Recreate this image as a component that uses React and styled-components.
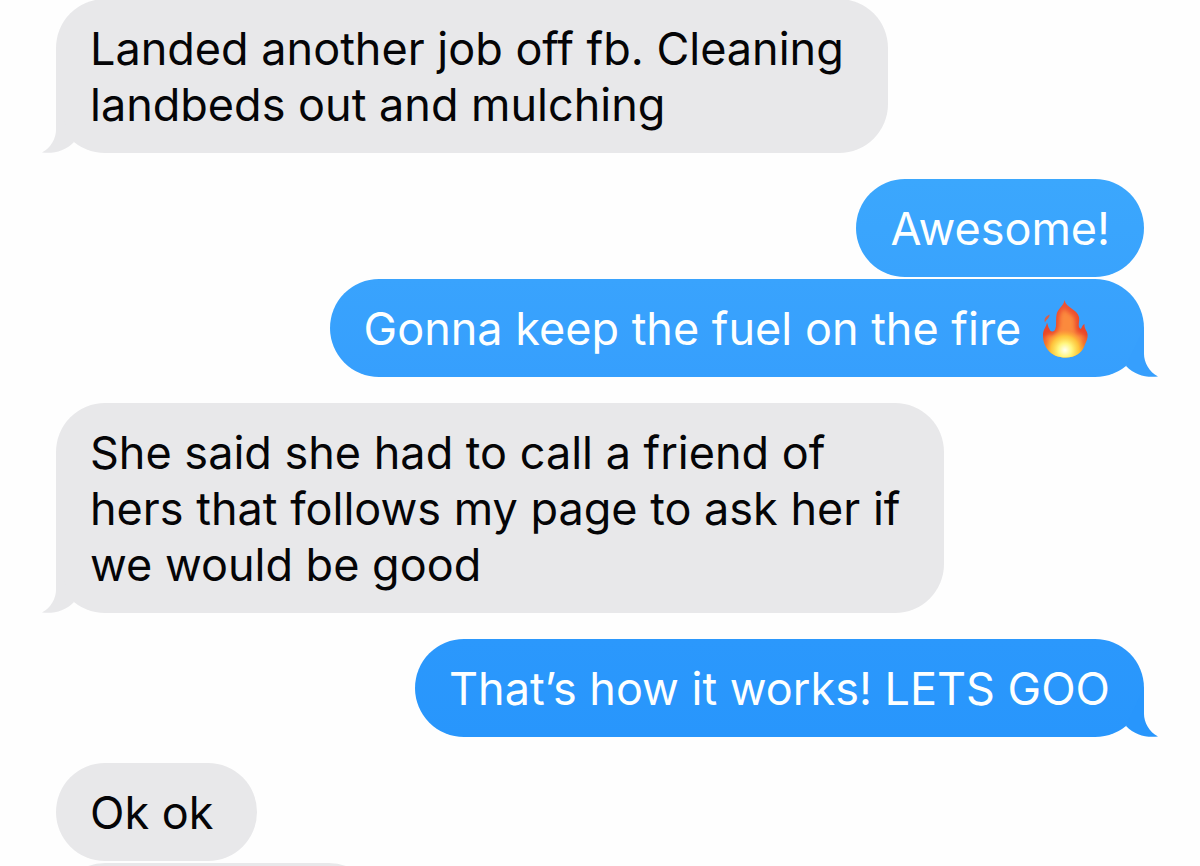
import React from "react";
import styled, { createGlobalStyle } from "styled-components";

const GlobalStyle = createGlobalStyle`
  * { box-sizing: border-box; }
  html, body { margin: 0; background: #fefefe; }
  body { font-family: Inter, "Liberation Sans", sans-serif; }
`;

const Viewport = styled.main`
  height: 100vh;
  overflow: hidden;
`;

const Thread = styled.ol`
  list-style: none;
  margin: -1px 0 0;
  padding: 0 56px;
  display: flex;
  flex-direction: column;
  gap: 26px;
`;

const Group = styled.li`
  display: flex;
  flex-direction: column;
  align-items: ${(p) => (p.$sent ? "flex-end" : "flex-start")};
  gap: 2px;
`;

const Bubble = styled.p`
  position: relative;
  margin: 0;
  padding: ${(p) => (p.$sent ? "22px 34px 20px" : "22px 44px 20px 34px")};
  min-height: 98px;
  border-radius: 49px;
  font-size: 45px;
  line-height: 56px;
  color: ${(p) => (p.$sent ? "#fdffff" : "#050507")};
  background: ${(p) => p.$fill || "#e8e8ea"};
`;

const EmptyBubble = styled(Bubble)`
  width: 322px;
`;

const TailShape = styled.svg`
  position: absolute;
  bottom: 0;
  width: 32px;
  height: 53px;
  ${(p) => (p.$sent ? "right: -14px; transform: scaleX(-1);" : "left: -14px;")}
  fill: ${(p) => p.$color};
`;

const FireIcon = styled.svg`
  display: inline-block;
  width: 52px;
  height: 60px;
  margin: -8px 20px -8px 4px;
  vertical-align: -6px;
`;

function Tail({ sent, color = "#e8e8ea" }) {
  return (
    <TailShape $sent={sent} $color={color} viewBox="0 0 32 53" aria-hidden="true">
      <path d="M14 4V30C14 38 9 48 0 52.5C12 54 23 51 32 42Z" />
    </TailShape>
  );
}

function Fire() {
  const flame =
    "M26.5 1C26 7 19 10 18.5 16C17.5 22 19 26 17 31C14 34 12 32 11.500 30C10 28 10 26 9 23.500C8.500 28 5 30 5 36C5 43 7 47 10 51C14 56 20 58.500 28 58.500C37 58.500 43 54 46 48C48 43 50 40 49.500 35C49 31 46 30 46.500 25C44 26 44 29 42.500 30C39 27 42 23 41 18C39 10 28 9 26.500 1Z";
  return (
    <FireIcon viewBox="0 0 52 60" role="img" aria-label="fire">
      <defs>
        <linearGradient id="outer" x1="0" y1="0" x2="0" y2="1">
          <stop offset="0" stopColor="#ee5434" />
          <stop offset="0.6" stopColor="#e9452a" />
          <stop offset="0.85" stopColor="#f78a2a" />
          <stop offset="1" stopColor="#fcc23c" />
        </linearGradient>
        <radialGradient id="core" cx="27" cy="51" r="20" gradientUnits="userSpaceOnUse">
          <stop offset="0" stopColor="#fffff4" />
          <stop offset="0.35" stopColor="#fff67c" />
          <stop offset="0.7" stopColor="#ffd23c" stopOpacity="0.8" />
          <stop offset="1" stopColor="#ffb030" stopOpacity="0" />
        </radialGradient>
        <filter id="soft" x="-20%" y="-20%" width="140%" height="140%">
          <feGaussianBlur stdDeviation="2" />
        </filter>
        <clipPath id="edge">
          <path d={flame} />
        </clipPath>
      </defs>
      <path fill="url(#outer)" d={flame} />
      <path fill="#d8604a" d="M11.500 15.500C8 17 5.500 20 7 23.500C8 20.500 12 19 11.500 15.500Z" />
      <g clipPath="url(#edge)">
        <path
          fill="#fb8a3c"
          filter="url(#soft)"
          d="M26 9C24 13 21 15 21.500 22C21 29 20 34 14 36C10 35 8 36 8 40C10 50 17 56 27 57C38 56 44 49 46 38C44 34 42 36 39 34C36 30 38 24 36 18C33 14 28 13 26 9Z"
        />
        <ellipse cx="27" cy="48" rx="19" ry="17" fill="url(#core)" />
      </g>
    </FireIcon>
  );
}

export default function App() {
  return (
    <>
      <GlobalStyle />
      <Viewport>
        <Thread aria-label="Messages">
          <Group>
            <Bubble>
              Landed another job off fb. Cleaning
              <br />
              landbeds out and mulching
              <Tail />
            </Bubble>
          </Group>
          <Group $sent>
            <Bubble $sent $fill="linear-gradient(#3ba7fd, #39a3fd)">Awesome!</Bubble>
            <Bubble $sent $fill="linear-gradient(#39a3fd, #369ffd)">
              Gonna keep the fuel on the fire <Fire />
              <Tail sent color="#369ffd" />
            </Bubble>
          </Group>
          <Group>
            <Bubble>
              She said she had to call a friend of
              <br />
              hers that follows my page to ask her if
              <br />
              we would be good
              <Tail />
            </Bubble>
          </Group>
          <Group $sent>
            <Bubble $sent $fill="linear-gradient(#2b98fc, #2896fc)">
              That’s how it works! LETS GOO
              <Tail sent color="#2896fc" />
            </Bubble>
          </Group>
          <Group>
            <Bubble>Ok ok</Bubble>
            <EmptyBubble />
          </Group>
        </Thread>
      </Viewport>
    </>
  );
}
